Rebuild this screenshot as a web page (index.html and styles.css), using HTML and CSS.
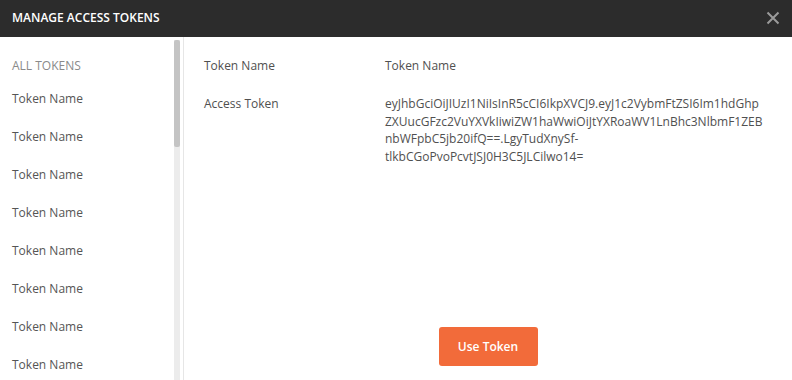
FILE: index.html
```html
<!DOCTYPE html>
<html lang="en">
  <head>
    <meta charset="UTF-8">
    <title>Manage Access Tokens</title>
    <link rel="stylesheet" href="styles.css">
  </head>
  <body>
    <div class="modal">
      <div class="modal-header">
        <span class="modal-title">MANAGE ACCESS TOKENS</span>
        <button class="close-button" aria-label="Close">
          <svg width="14" height="14" viewBox="0 0 14 14">
            <path d="M1.5 1.5 L12.5 12.5 M12.5 1.5 L1.5 12.5" stroke="#9a9a9a" stroke-width="2" fill="none"/>
          </svg>
        </button>
      </div>

      <div class="modal-body">
        <div class="token-sidebar">
          <div class="token-list">
            <div class="list-heading">ALL TOKENS</div>
            <div class="token-item">Token Name</div>
            <div class="token-item">Token Name</div>
            <div class="token-item">Token Name</div>
            <div class="token-item">Token Name</div>
            <div class="token-item">Token Name</div>
            <div class="token-item">Token Name</div>
            <div class="token-item">Token Name</div>
            <div class="token-item">Token Name</div>
            <div class="token-item">Token Name</div>
          </div>
          <div class="scroll-track">
            <div class="scroll-thumb"></div>
          </div>
        </div>

        <div class="token-details">
          <div class="detail-rows">
            <div class="detail-row">
              <div class="detail-label">Token Name</div>
              <div class="detail-value">Token Name</div>
            </div>
            <div class="detail-row">
              <div class="detail-label">Access Token</div>
              <div class="detail-value token-value">eyJhbGciOiJIUzI1NiIsInR5cCI6IkpXVCJ9.eyJ1c2VybmFtZSI6Im1hdGhpZXUucGFzc2VuYXVkIiwiZW1haWwiOiJtYXRoaWV1LnBhc3NlbmF1ZEBnbWFpbC5jb20ifQ==.LgyTudXnySf-tlkbCGoPvoPcvtJSJ0H3C5JLCilwo14=</div>
            </div>
          </div>
          <div class="detail-actions">
            <button class="use-button">Use Token</button>
          </div>
        </div>
      </div>
    </div>
  </body>
</html>
```

FILE: styles.css
```css
html, body {
  margin: 0;
  height: 100%;
}
body {
  background: white;
  font-family: 'Open Sans', sans-serif;
  font-size: 12px;
  color: #505050;
  overflow: hidden;
}
.modal {
  display: flex;
  flex-direction: column;
  height: 380px;
}
.modal-header {
  background: #2c2c2c;
  height: 37px;
  flex-shrink: 0;
  display: flex;
  align-items: center;
  justify-content: space-between;
  padding: 0 10px 2px 12px;
  box-sizing: border-box;
}
.modal-title {
  color: white;
  font-weight: 600;
  font-size: 12px;
}
.close-button {
  background: none;
  border: none;
  padding: 0;
  width: 18px;
  height: 18px;
  display: flex;
  align-items: center;
  justify-content: center;
  cursor: pointer;
}
.modal-body {
  flex: 1;
  display: flex;
  min-height: 0;
}
.token-sidebar {
  width: 180px;
  padding-right: 3px;
  border-right: 1px solid #e6e6e6;
  display: flex;
  flex-shrink: 0;
}
.token-list {
  flex: 1;
  overflow: hidden;
  padding: 20px 0 0 12px;
}
.scroll-track {
  width: 6px;
  margin-top: 3px;
  background: #ececec;
}
.scroll-thumb {
  height: 107px;
  background: #c4c4c4;
  border-radius: 2px;
}
.list-heading {
  color: #8a8a8a;
  line-height: 18px;
  margin-bottom: 5px;
}
.token-item {
  height: 38px;
  line-height: 38px;
  color: #555;
  cursor: pointer;
}
.token-details {
  flex: 1;
  min-width: 0;
  display: flex;
  flex-direction: column;
  justify-content: space-between;
  padding: 20px 28px 14px 20px;
}
.detail-row {
  display: flex;
  margin-bottom: 20px;
}
.detail-label {
  width: 181px;
  flex-shrink: 0;
  line-height: 18px;
}
.detail-value {
  flex: 1;
  min-width: 0;
  line-height: 18px;
}
.token-value {
  line-height: 17.5px;
  overflow-wrap: break-word;
}
.detail-actions {
  display: flex;
  justify-content: center;
  margin-right: -8px;
}
.use-button {
  background: #f26b3a;
  color: white;
  border: none;
  border-radius: 3px;
  width: 99px;
  height: 39px;
  font-family: 'Open Sans', sans-serif;
  font-size: 12px;
  font-weight: 600;
  cursor: pointer;
}
```
